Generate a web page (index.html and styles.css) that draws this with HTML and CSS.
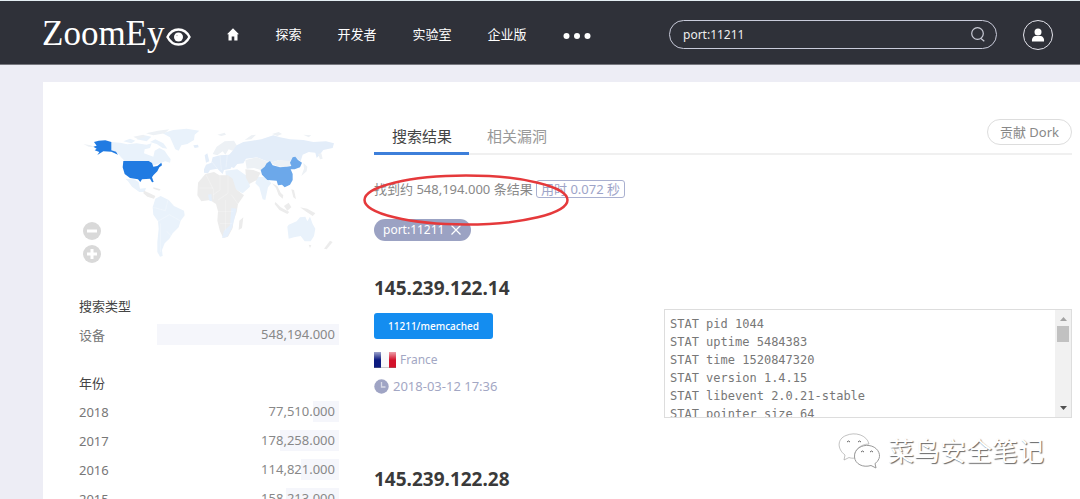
FILE: index.html
```html
<!DOCTYPE html>
<html lang="zh-CN">
<head>
<meta charset="utf-8">
<meta name="viewport" content="width=device-width, initial-scale=1">
<title>ZoomEye</title>
<link rel="stylesheet" href="styles.css">
</head>
<body>
<header class="topbar">
  <a class="logo" href="#">ZoomEy<svg class="logo-eye" viewBox="0 0 25 18" aria-hidden="true"><path d="M1.500 9C4 4 8 1.500 12.500 1.500S21 4 23.500 9C21 14 17 16.500 12.500 16.500S4 14 1.500 9z" fill="none" stroke="#fff" stroke-width="2.400"/><circle cx="12.500" cy="9" r="4.500" fill="#fff"/><circle cx="11" cy="7.500" r=".8" fill="#bbb"/></svg></a>
  <nav class="nav">
    <a href="#" aria-label="Home"><svg class="home" viewBox="0 0 12 13"><path d="M6 0.300L12 6.200H10.500V12.500H7.300V8.500H4.700V12.500H1.500V6.200H0z" fill="#fff"/></svg></a>
    <a href="#">探索</a>
    <a href="#">开发者</a>
    <a href="#">实验室</a>
    <a href="#">企业版</a>
    <button class="more" type="button" aria-label="More"><svg width="28" height="8" viewBox="0 0 28 8"><g fill="#fff"><circle cx="3.500" cy="5" r="3"/><circle cx="14" cy="5" r="3"/><circle cx="24.500" cy="5" r="3"/></g></svg></button>
  </nav>
  <form class="search">
    <input class="search-input" type="text" value="port:11211" aria-label="Search">
    <button class="search-btn" type="button" aria-label="Search"><svg width="14" height="15" viewBox="0 0 14 15" fill="none" stroke="#c9cbd6" stroke-width="1.200"><circle cx="6.500" cy="6.500" r="5.800"/><path d="M10 11.500L13.300 14.300"/></svg></button>
  </form>
  <button class="user" type="button" aria-label="Account"><svg width="14" height="14" viewBox="0 0 14 14" fill="#fff"><circle cx="7" cy="4" r="3.500"/><path d="M1 13.500C.5 10 2.500 8 5 8h4c2.500 0 4.500 2 4 5.500z"/></svg></button>
</header>

<div class="card">
  <aside class="sidebar">
    <div class="map">
      <svg class="world" viewBox="27 15 780 420" aria-hidden="true">
        <g fill="#e9f2fb">
          <path d="M124 66L150 68 172 73 200 70 230 74 245 70 240 84 224 88 222 100 238 106 250 110 254 92 268 84 284 92 292 104 302 118 300 128 286 124 270 130 246 138 236 124 164 123 152 110 142 98 124 90z"/>
          <path d="M160 64l20-8 16 6-12 8zM200 58l24-12 20 4-14 14zM240 66l16-8 24 12 12 16-14-2-18-12z"/>
          <path d="M278 40L310 30 350 26 388 32 374 44 372 60 352 72 334 76 326 92 316 88 308 70 300 52z"/>
          <path d="M166 176l26 2 14 8 4 20 18-2-4 12-16 0-22-16-12-16z"/>
          <path d="M256 236L272 228 296 240 312 258 342 272 344 286 332 302 326 322 308 340 298 356 284 370 276 390 278 408 270 410 262 396 262 366 266 326 264 304 250 284 248 262z"/>
          <path d="M652 320L656 314 680 304 690 292 706 290 712 304 720 290 728 312 736 326 732 348 722 364 704 364 692 348 672 352 656 356z"/>
          <path d="M562 170l26 2 16 18-10 12-8 38-8-2-10-36-12-12z"/>
          <path d="M466 152l36-4 32 22 6 30-22 20-22-12-10-28-18-8z"/>
        </g>
        <g fill="#e3edf9">
          <path d="M476 76L500 76 520 66 546 62 574 58 610 46 630 52 660 58 700 60 730 66 768 64 792 70 788 84 760 90 748 106 740 114 736 98 716 96 698 104 692 124 676 112 656 126 628 120 602 128 560 112 528 116 520 130 502 132 492 144 474 138 466 124 476 106 490 90z"/>
          <path d="M402 148l6-14 16-6 4-16 22-6 28-2 14 20-10 22-20 4-4 12-16-16-22 4-6 10-12-2zM404 106l8-6 6 24-10 4zM370 76l14-2 2 8-12 2z"/>
        </g>
        <g fill="#edf1f5">
          <path d="M428 102L440 80 464 64 492 62 500 76 488 92 476 88 466 104 458 94 442 106z"/>
          <path d="M526 120L560 112 600 128 590 140 572 150 552 144 530 146z"/>
          <path d="M602 128L628 120 664 124 668 134 644 142 620 138z"/>
          <path d="M442 44l22-6 4 6-14 4zM524 60l20-14 14-2-14 14zM606 42l20-6 10 6-14 6zM700 44l24 2-8 6zM744 102l10-2 4 16-8 2zM700 128l12 12-2 14-16 14 8-22z"/>
          <path d="M228 40l36-8 34-4-14 12-34 6zM190 50l30-6 8 6-24 8zM40 72l22 4 10 6-16-2z"/>
        </g>
        <g fill="#ececec">
          <path d="M384 188L406 162 432 156 448 166 474 166 488 176 498 208 522 226 504 252 500 276 490 304 488 324 474 350 460 354 450 334 442 302 444 274 438 252 420 240 394 244 382 226z"/>
          <path d="M508 302l12-10-4 32-10 6zM526 148l24 2 22 8-12 22-22 12-10-18z"/>
          <path d="M606 190l16 8 10 20 8 8-2 10-12-10-8-22zM222 212l14 6 20 10-4 8-20-6-12-10zM250 202l22 6-4 4-18-6z"/>
          <path d="M616 246l16 16 26 14-6 6-24-12-14-18zM642 258l14-10 8 14-12 10zM690 262l22 4 24 14-8 8-18-12zM664 208l8 2 6 28-8-6zM716 374l8 2-4 8zM780 362l8 4-18 22-8-2z"/>
        </g>
        <path fill="#e5effb" d="M484 264l16 2-8 36-6 22-14 26-16 4 6-22 18-16zM414 224l10-2 2 22-8-2z"/>
        <g fill="none" stroke="#fff" stroke-opacity=".4" stroke-width="2"><path d="M408 164l22 44 0 30M450 166v44l-20 14M474 166v54l-30 20M388 204h42M442 274h48M450 310h36M466 240v92M484 224l20 28M264 304l34-20 32 18M250 262l36 10 8-32M272 310v86M290 334l14 14M426 126l16 20M450 106l4 44M472 104l-4 38"/></g>
        <path fill="#217be2" d="M72 66L86 62 106 61 124 66 124 91 138 95 144 104 124 95 100 94 82 105 88 96 74 91 80 86 70 80 80 77z"/>
        <path fill="#217be2" d="M160 123H236L246 129 250 140 262 138 274 128 276 136 268 142 262 154 250 166 246 172 251 186 246 187 240 176 216 178 211 186 204 178 180 174 164 162 158 142z"/>
        <path fill="#6ca8ea" d="M572 150L584 140 590 130 600 123 608 136 630 142 650 140 664 138 660 128 668 112 676 110 684 120 696 128 690 142 674 148 662 148 668 162 668 180 660 194 644 202 636 194 624 196 620 182 592 180 576 164z"/>
      </svg>
      <div class="map-zoom">
        <button type="button" aria-label="Zoom out"><svg width="10" height="10" viewBox="0 0 10 10"><path d="M0 5h10" stroke="#fff" stroke-width="3"/></svg></button>
        <button type="button" aria-label="Zoom in"><svg width="10" height="10" viewBox="0 0 10 10"><path d="M0 5h10M5 0v10" stroke="#fff" stroke-width="3"/></svg></button>
      </div>
    </div>
    <table class="facet">
      <caption>搜索类型</caption>
      <tr><th scope="row">设备</th><td><span class="bar" style="width:100%"></span><span class="num">548,194.000</span></td></tr>
    </table>
    <table class="facet">
      <caption>年份</caption>
      <tr><th scope="row">2018</th><td><span class="bar" style="width:14.100%"></span><span class="num">77,510.000</span></td></tr>
      <tr><th scope="row">2017</th><td><span class="bar" style="width:32.500%"></span><span class="num">178,258.000</span></td></tr>
      <tr><th scope="row">2016</th><td><span class="bar" style="width:20.900%"></span><span class="num">114,821.000</span></td></tr>
      <tr><th scope="row">2015</th><td><span class="bar" style="width:28.900%"></span><span class="num">158,213.000</span></td></tr>
    </table>
  </aside>

  <main class="main">
    <div class="tabs">
      <a class="tab tab-active" href="#">搜索结果</a>
      <a class="tab" href="#">相关漏洞</a>
      <button class="dork" type="button">贡献 Dork</button>
    </div>
    <div class="summary">
      <p class="count">找到约 548,194.000 条结果 <span class="time">用时 0.072 秒</span></p>
      <button class="tag" type="button">port:11211<svg width="10" height="10" viewBox="0 0 10 10"><path d="M0.500 0.500l9 9M9.500 0.500l-9 9" stroke="#fff" stroke-width="1.200"/></svg></button>
      <svg class="mark" viewBox="0 0 206 52" aria-hidden="true"><ellipse cx="103" cy="26" rx="101.500" ry="24.500" fill="none" stroke="#e5393b" stroke-width="2.500"/></svg>
    </div>
    <article class="result">
      <div class="host">
        <h2>145.239.122.14</h2>
        <a class="port" href="#">11211/memcached</a>
        <p class="meta"><svg width="22" height="16" viewBox="0 0 22 16"><defs><linearGradient id="shine" x2="0" y2="1"><stop offset="0" stop-color="#fff" stop-opacity=".6"/><stop offset=".5" stop-color="#fff" stop-opacity="0"/></linearGradient></defs><path fill="#0c1a80" d="M0 0h7v16H0z"/><path fill="#f8f8fa" d="M7 0h8v16H7z"/><path fill="#d3122b" d="M15 0h7v16h-7z"/><path fill="url(#shine)" d="M0 0h22v16H0z"/><path d="M0 15.500h22" stroke="#888" stroke-opacity=".4"/></svg><span class="country">France</span></p>
        <p class="meta"><svg width="15" height="15" viewBox="0 0 15 15"><circle cx="7.500" cy="7.500" r="7.200" fill="#9fa4c4"/><path d="M7.500 3v5h4" fill="none" stroke="#fff" stroke-opacity=".6" stroke-width="1.300"/></svg><time>2018-03-12 17:36</time></p>
      </div>
      <div class="banner">
        <pre>STAT pid 1044
STAT uptime 5484383
STAT time 1520847320
STAT version 1.4.15
STAT libevent 2.0.21-stable
STAT pointer_size 64</pre>
        <div class="scroll"><svg width="7" height="4" viewBox="0 0 7 4"><path d="M0 4L3.500 0 7 4z" fill="#a3a3a3"/></svg><span class="thumb"></span><svg class="down" width="7" height="4" viewBox="0 0 7 4"><path d="M0 0L3.500 4 7 0z" fill="#505050"/></svg></div>
      </div>
    </article>
    <article class="result">
      <div class="host">
        <h2>145.239.122.28</h2>
      </div>
    </article>
  </main>
</div>

<div class="watermark">
  <svg width="42" height="36" viewBox="0 0 42 36" fill="#fff" stroke="#999" stroke-width="1"><path d="M6 27l1-5C-1 16-1 6 8 2.500 17-1.500 29 2 31 11c-9 0-16 7-14 14-2 .5-5 0-6-.5z" stroke-opacity=".6"/><path d="M38 35l-5-2.500C25 35 17 31 16.500 24 16 16 24 11.500 31 12.500c8 1 12 8 10 13-1 2-2 4-4 5z"/><path d="M9 9q1.500-2 3 0M20 9q1.500-2 3 0M23 19q1.500-2 3 0M32 19q1.500-2 3 0" fill="none" stroke="#666"/></svg>
  <span>菜鸟安全笔记</span>
</div>
</body>
</html>
```

FILE: styles.css
```css
* { box-sizing: border-box; }
html { scrollbar-width: none; }
body {
  margin: 0;
  min-height: 100vh;
  background: #ededf5;
  color: #777;
  font: 13px/20px "Noto Sans", "Noto Sans CJK SC", sans-serif;
}
a { color: inherit; text-decoration: none; }
button { margin: 0; padding: 0; border: 0; background: none; font: inherit; color: inherit; cursor: pointer; }
h2, p, pre { margin: 0; }
svg { display: block; flex: none; }

.topbar {
  display: flex;
  align-items: center;
  height: 65px;
  padding: 4px 27px 0 42px;
  border-top: 1px solid #e4eef3;
  border-bottom: 1px solid #77787f;
  background: #2f3139;
  color: #fff;
}
.logo { display: flex; align-items: center; gap: 2px; padding-bottom: 2px; font: 35px/40px "Liberation Serif", serif; }
.logo-eye { width: 25px; height: 18px; margin-top: 7px; }
.nav { display: flex; align-items: center; gap: 36px; margin-left: 36px; padding-bottom: 1px; white-space: nowrap; }
.home { width: 12px; height: 13px; }
.more { padding-top: 1px; }
.search {
  display: flex;
  align-items: center;
  width: 328px;
  height: 29px;
  margin-left: auto;
  padding: 0 11px 0 13px;
  border: 1px solid #c9cbda;
  border-radius: 15px;
}
.search-input { flex: 1; min-width: 0; padding: 0; border: 0; outline: 0; background: none; color: #eee; font: 12px/20px "Noto Sans", sans-serif; }
.user {
  display: flex;
  align-items: center;
  justify-content: center;
  width: 30px;
  height: 30px;
  margin-left: 26px;
  border: 1px solid #e4e4ec;
  border-radius: 50%;
}

.card {
  display: flex;
  gap: 35px;
  margin: 17px 0 0 43px;
  padding: 36px 8px 36px 36px;
  background: #fff;
}
.sidebar { flex: 0 0 260px; padding-top: 7px; }
.map { position: relative; margin-bottom: 31px; }
.world { width: 100%; }
.map-zoom { position: absolute; left: 4px; bottom: 2px; display: grid; gap: 5px; }
.map-zoom button { display: flex; align-items: center; justify-content: center; width: 18px; height: 18px; border-radius: 50%; background: #d9d9d9; }
.facet { width: 100%; border-collapse: collapse; margin-bottom: 24px; }
.facet caption { padding-bottom: 4px; text-align: left; color: #444; }
.facet th { padding: 4px 0; width: 78px; font-weight: 400; text-align: left; color: #777; }
.facet td { position: relative; padding: 4px; text-align: right; line-height: 21px; color: #888; }
.bar { position: absolute; right: 0; top: 4px; bottom: 4px; background: #f5f6fb; }
.num { position: relative; }

.main { flex: 1; min-width: 0; }
.tabs { display: flex; align-items: flex-start; height: 37px; border-bottom: 2px solid #f0f0f0; }
.tab { height: 37px; padding: 6px 17px 0 18px; font-size: 15px; line-height: 24px; color: #999; }
.tab-active { border-bottom: 3px solid #3d7fda; color: #444; }
.dork { margin: 1px 0 0 auto; padding: 2px 12px; border: 1px solid #ddd; border-radius: 13px; color: #888; }
.summary { position: relative; padding-top: 24px; }
.count { color: #888; }
.time { display: inline-block; padding: 0 4px; border: 1px solid #a9b0d0; border-radius: 3px; line-height: 16px; color: #9da4c8; }
.tag { display: flex; align-items: center; gap: 7px; height: 22px; margin-top: 20px; padding: 0 10px 0 9px; border-radius: 11px; background: #9ba2c3; color: #fff; font-size: 12px; }
.mark { position: absolute; left: -11px; top: 19px; width: 206px; height: 52px; }

.result { display: flex; justify-content: space-between; min-height: 155px; margin-top: 36px; }
.host { display: flex; flex-direction: column; align-items: flex-start; }
.host h2 { font-size: 19px; line-height: 22px; color: #3a3a3a; }
.port { margin: 14px 0 11px; padding: 3px 14px; border-radius: 3px; background: #148df0; color: #fff; font-size: 10px; font-weight: 500; }
.meta { display: flex; align-items: center; gap: 4px; height: 20px; margin-bottom: 6px; color: #a3a7c4; }
.country { font-size: 12px; }
.banner { display: flex; width: 408px; height: 109px; margin-top: 32px; border: 1px solid #ddd; overflow: hidden; }
.banner pre { flex: 1; padding: 5px; color: #777; font: 12px/18px "DejaVu Sans Mono", monospace; }
.scroll { display: flex; flex-direction: column; align-items: center; gap: 5px; width: 16px; padding: 7px 0; background: #f1f1f1; }
.thumb { width: 12px; height: 16px; background: #c1c1c1; }
.down { margin-top: auto; }

.watermark {
  position: absolute;
  left: 838px;
  top: 432px;
  display: flex;
  align-items: center;
  gap: 8px;
  color: #fff;
  font-size: 26px;
  line-height: 38px;
  text-shadow: 1px 1px 1px #666;
}
```
